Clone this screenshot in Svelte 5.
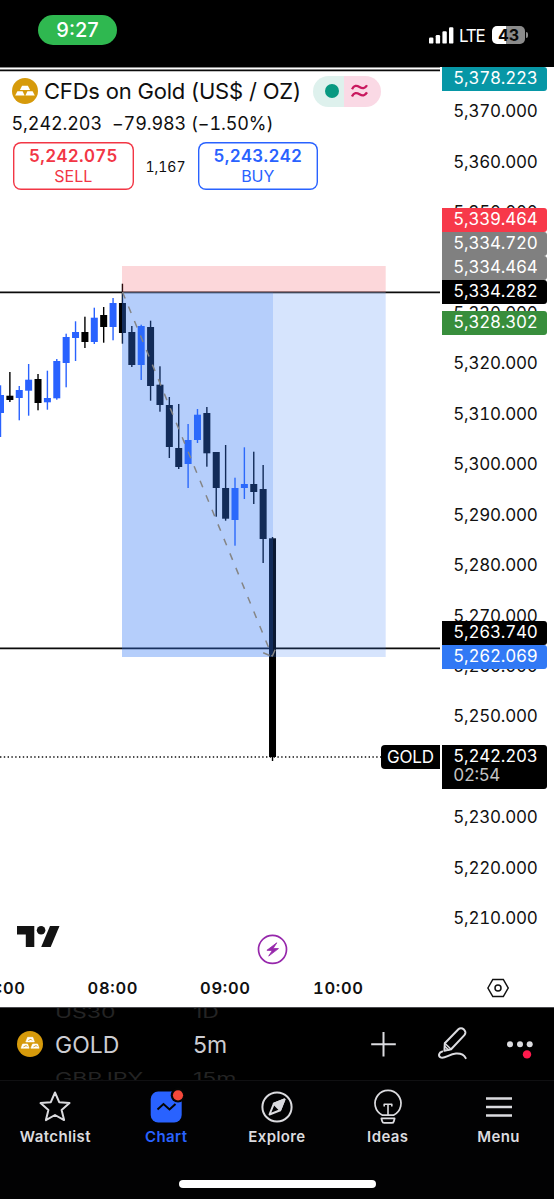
<script>
  const STEP = 9.38;
  const priceY = (p) => 112 + (5370 - p) * 5.044;
  const candleX = (i) => 0.5 + i * STEP;

  // [body top, body bottom, wick top, wick bottom, up?]
  const candles = [
    [395, 413, 385.3, 437, 1],
    [395.7, 400, 372, 402, 0],
    [390, 398, 386, 420.3, 1],
    [379.7, 390.7, 364, 415.7, 1],
    [379, 403, 374, 410.3, 0],
    [398, 402.3, 370.7, 409.7, 1],
    [361, 398.3, 359, 399.7, 1],
    [337, 363, 333.7, 387.3, 1],
    [332, 338, 321.3, 361, 1],
    [332, 342, 316.7, 348, 0],
    [317.7, 342, 307.7, 344, 1],
    [315, 327, 307, 342.7, 0],
    [303, 327, 298, 340.3, 1],
    [303, 333, 283.7, 343.7, 0],
    [332, 365, 326, 367, 0],
    [326, 365, 324.7, 380, 1],
    [327, 386, 320.7, 400.7, 0],
    [384.7, 405, 366.3, 411.7, 0],
    [405, 447, 397, 458, 0],
    [448, 467, 404, 469, 0],
    [440, 464, 424, 488, 1],
    [414.7, 440, 409, 443, 1],
    [413, 453.3, 407, 466.7, 0],
    [452, 488, 452, 516.7, 0],
    [488, 518.7, 445, 520.7, 0],
    [488, 520, 477.7, 545.7, 1],
    [484, 488, 447.3, 499, 1],
    [484, 492, 451.7, 504, 0],
    [489, 539, 465, 563, 0],
    [538.3, 757, 537, 761, 0],
  ];

  const ticks = [5370, 5360, 5350, 5330, 5320, 5310, 5300, 5290, 5280, 5270, 5260, 5250, 5230, 5220, 5210];

  const labels = [
    { text: '5,378.223', top: 67, h: 24, color: '#0797a6' },
    { text: '5,339.464', top: 208, h: 24, color: '#f7394a' },
    { text: '5,334.720', top: 232, h: 24, color: '#808080' },
    { text: '5,334.464', top: 256, h: 24, color: '#808080' },
    { text: '5,334.282', top: 280, h: 24, color: '#000' },
    { text: '5,328.302', top: 311, h: 24, color: '#388e3c' },
    { text: '5,263.740', top: 621, h: 24, color: '#000' },
    { text: '5,262.069', top: 645, h: 24, color: '#3179f5' },
    { text: '5,242.203', top: 745, h: 44, color: '#000', sub: '02:54' },
  ];

  const times = [
    { x: 0, text: '07:00' },
    { x: 112.5, text: '08:00' },
    { x: 225, text: '09:00' },
    { x: 338, text: '10:00' },
  ];

  const fmt = (n) => n.toLocaleString('en-US', { minimumFractionDigits: 3 });
</script>

{#snippet gold(detail)}
  <svg class="gold" viewBox="0 0 26 26" width="26" height="26">
    <circle cx="13" cy="13" r="13" fill="#d69a0b" />
    {#if detail}
      <g fill="#fff" stroke="#fff" stroke-width=".6" stroke-linejoin="round">
        <path d="M10.6 6.3h5.2l1.6 4.6H8.8z" />
        <path d="M5.6 13h5l1.5 4.2H4.1z" />
        <path d="M15.6 13h5l1.5 4.2h-8.2z" />
      </g>
      <path d="M11.2 9.5l2.8-1.3 1 1.3M6.5 15.8l2.8-1.3 1 1.3M16.5 15.8l2.8-1.3 1 1.3" fill="none" stroke="#d69a0b" stroke-width=".9" />
    {:else}
      <g fill="#fff">
        <path d="M10.1 7.7h5.8l2.2 4.4H7.9z" />
        <path d="M5.4 13.2h5.2l2 4.2H3.2z" />
        <path d="M15.4 13.2h5.2l2.2 4.2h-9.4z" />
      </g>
    {/if}
  </svg>
{/snippet}

<div class="screen">
  <header class="status">
    <span class="clock">9:27</span>
    <div class="signal">
      <svg width="25" height="17" viewBox="0 0 25 17" fill="#fff">
        <rect x="0" y="10.6" width="4.4" height="6" rx="1.2" />
        <rect x="6.7" y="8" width="4.4" height="8.6" rx="1.2" />
        <rect x="13.4" y="4.2" width="4.4" height="12.4" rx="1.2" />
        <rect x="20" y="0.2" width="4.4" height="16.4" rx="1.2" />
      </svg>
      <span class="lte">LTE</span>
      <span class="battery">43</span>
      <i class="nub"></i>
    </div>
  </header>

  <section class="chart">
    <svg class="plot" width="441" height="940" viewBox="0 67 441 940">
      <g stroke="#0b0b0b" stroke-width="1.7">
        <line x1="0" x2="440" y1="70.3" y2="70.3" />
        <line x1="0" x2="440" y1="292.3" y2="292.3" />
        <line x1="0" x2="440" y1="648.3" y2="648.3" />
      </g>
      <line x1="0" x2="440" y1="67.5" y2="67.5" stroke="#8a8a8a" />
      <line x1="0" x2="381" y1="757" y2="757" stroke="#111" stroke-width="1.3" stroke-dasharray="1.4 2.4" />

      {#each candles as [top, bottom, high, low, up], i}
        <g fill={up ? '#2962ff' : '#000'}>
          <rect x={candleX(i) - 0.7} y={high} width="1.4" height={low - high} />
          <rect x={candleX(i) - 3.5} y={top} width="7" height={bottom - top} />
        </g>
      {/each}

      <!-- short position: stop zone, target zone, filled part -->
      <rect x="122" y="266" width="263.7" height="26.3" fill="#f23645" fill-opacity=".2" />
      <rect x="122" y="292.3" width="263.7" height="364.7" fill="#3179f5" fill-opacity=".2" />
      <rect x="122" y="292.3" width="151" height="364.7" fill="#3179f5" fill-opacity=".2" />
      <line x1="122" x2="385.7" y1="292.6" y2="292.6" stroke="#787b86" stroke-opacity=".5" />
      <g fill="none" stroke="#858585" stroke-width="1.5">
        <line x1="122.5" y1="292" x2="272.3" y2="656.5" stroke-dasharray="7 8.7" />
        <path d="M263.2 652.8l9 3.7 3.7-8.6" stroke-dasharray="7 3" />
      </g>

      <path d="M385 745h55v24h-55a4 4 0 0 1-4-4v-16a4 4 0 0 1 4-4z" />
      <text class="tag" x="387" y="763" textLength="47">GOLD</text>

      <g fill="#131313">
        <path d="M17 926h17.3v21h-8.5v-12.5H17z" />
        <circle cx="41.1" cy="930.3" r="4.3" />
        <path d="M50 926h9.5l-8.8 21h-9.5z" />
      </g>

      <circle cx="272.5" cy="949.4" r="14" fill="#fff" stroke="#9627ab" stroke-width="1.7" />
      <path d="M276.8 942.8l-9.9 7.5 5.4.2-3.6 5.6 9.8-7.5-5.4-.2z" fill="#9627ab" stroke="#9627ab" stroke-width=".8" stroke-linejoin="round" />

      {#each times as t}
        <text class="time" x={t.x} y="994.3" textLength="50">{t.text}</text>
      {/each}
    </svg>

    <svg class="axis" width="113" height="940" viewBox="441 67 113 940">
      {#each ticks as p}
        <text x="453.3" y={priceY(p) + 5.2} textLength="84.5">{fmt(p)}</text>
      {/each}
      {#each labels as l}
        <path d="M442 {l.top}h102a3 3 0 0 1 3 3v{l.h - 6}a3 3 0 0 1 -3 3h-102z" fill={l.color} />
        <text class="light" x="453.3" y={l.top + 17} textLength="84.5">{l.text}</text>
        {#if l.sub}
          <text class="sub" x="453.3" y={l.top + 36.4} textLength="47">{l.sub}</text>
        {/if}
      {/each}
      <g fill="none" stroke="#111" stroke-width="1.5">
        <path d="M487.9 988l4.9-8.6h10.5l4.9 8.6-4.9 8.6h-10.5z" />
        <circle cx="498" cy="988" r="3" />
      </g>
    </svg>

    <div class="legend">
      <div class="title">
        {@render gold(false)}
        <span class="name">CFDs on Gold (US$ / OZ)</span>
        <div class="market">
          <span class="open"><i></i></span>
          <span class="approx">
            <svg width="17" height="14" viewBox="0 0 17 14" fill="none" stroke="#c9195f" stroke-width="2.3">
              <path d="M1 5.2C3 1.2 5.6 1.2 8.5 3S14 4.7 16 1.2" />
              <path d="M1 12.4c2-4 4.6-4 7.5-2.2S14 11.900 16 8.400" />
            </svg>
          </span>
        </div>
      </div>
      <div class="quote"><span class="last">5,242.203</span><span class="change">−79.983 (−1.50%)</span></div>
      <div class="trade">
        <div class="order sell"><b>5,242.075</b><span>SELL</span></div>
        <span class="spread">1,167</span>
        <div class="order buy"><b>5,243.242</b><span>BUY</span></div>
      </div>
    </div>
  </section>

  <section class="toolbar">
    {@render gold(true)}
    <div class="wheel symbol">
      <span class="prev">US30</span>
      <span class="current">GOLD</span>
      <span class="next">GBPJPY</span>
    </div>
    <div class="wheel interval">
      <span class="prev">1D</span>
      <span class="current">5m</span>
      <span class="next">15m</span>
    </div>
    <svg class="tools" width="190" height="40" viewBox="364 1024 190 40" fill="none" stroke="#dcdce0" stroke-width="2">
      <path d="M371.2 1044.2h24.6M383.5 1032v24.5" />
      <g stroke-linecap="round" stroke-linejoin="round">
        <path d="M444.8 1043.3l13.6-14a3.6 3.6 0 0 1 5.2 0l.8.8a3.6 3.6 0 0 1 0 5l-13.3 14.2-6.7 1.5z" />
        <path d="M444.8 1043.3l6.3 6M445 1046.5l3.8 3.6" stroke-width="1.5" />
        <path d="M442.3 1051.5c-3.600.8-4.300 4.300-1.700 5.800 3.600 2 8.400-3.200 15.400-3.700 4.700-.3 8.200 1.400 9.700 4.600" />
      </g>
      <g fill="#dcdce0" stroke="none">
        <circle cx="510" cy="1044.2" r="3" />
        <circle cx="520" cy="1044.2" r="3" />
        <circle cx="529.7" cy="1044.2" r="3" />
      </g>
      <circle cx="527" cy="1054.4" r="4.2" fill="#ff1a4d" stroke="none" />
    </svg>
  </section>

  <nav>
    <div class="item">
      <svg width="36" height="36" viewBox="0 0 36 36" fill="none" stroke="#dbdbdf" stroke-width="2" stroke-linejoin="round">
        <path d="M18 4.5l4.2 9.7 10.300.9-7.900 6.800 2.500 10.200L18 27l-9.100 5.100 2.500-10.200-7.900-6.800 10.300-.9z" />
      </svg>
      <span>Watchlist</span>
    </div>
    <div class="item active">
      <svg width="36" height="36" viewBox="0 0 36 36">
        <rect x="2.7" y="3.5" width="31" height="31" rx="7.5" fill="#2962ff" />
        <path d="M9.5 21.5l6-5.5 6 5.5 6-5.5" fill="none" stroke="#050505" stroke-width="2" />
        <circle cx="30" cy="7.3" r="7.3" fill="#050505" />
        <circle cx="30" cy="7.3" r="5.1" fill="#f5483b" />
      </svg>
      <span>Chart</span>
    </div>
    <div class="item">
      <svg width="36" height="36" viewBox="0 0 36 36" fill="none" stroke="#dbdbdf" stroke-width="2" stroke-linejoin="round">
        <circle cx="18" cy="19" r="14.6" />
        <path d="M25.5 11.5l-4.3 10.7-10.7 4.3 4.3-10.7z" />
        <path d="M25.5 11.5l-4.3 10.7-6.4-6.4z" fill="#dbdbdf" />
      </svg>
      <span>Explore</span>
    </div>
    <div class="item">
      <svg width="36" height="36" viewBox="0 0 36 36" fill="none" stroke="#dbdbdf" stroke-width="1.8" stroke-linejoin="round">
        <path d="M12.5 27.2a13 13 0 1 1 11 0z" />
        <path d="M11.4 30.4h13.2l-.8 3a2 2 0 0 1-2 1.5h-7.600a2 2 0 0 1-2-1.500z" />
        <path d="M14.2 18.5v-2.200h7.600v2.200M18 16.500v10.500" stroke-width="1.6" />
      </svg>
      <span>Ideas</span>
    </div>
    <div class="item">
      <svg width="36" height="36" viewBox="0 0 36 36" stroke="#dbdbdf" stroke-width="2.6">
        <path d="M5 10.5h26M5 19h26M5 27.5h26" />
      </svg>
      <span>Menu</span>
    </div>
  </nav>
  <div class="home"></div>
</div>

<style>
  :global(body) {
    background: #000;
  }
  .screen {
    width: 554px;
    height: 1199px;
    overflow: hidden;
    display: flex;
    flex-direction: column;
    background: #020203;
    font-family: Inter, "Liberation Sans", sans-serif;
    color: #0f0f0f;
  }
  svg {
    display: block;
    flex: none;
  }

  /* status bar */
  .status {
    height: 67px;
    flex: none;
    box-sizing: border-box;
    padding: 15px 26px 0 38px;
    display: flex;
    justify-content: space-between;
    background: #000;
    color: #fff;
  }
  .clock {
    width: 79px;
    height: 30px;
    border-radius: 15px;
    background: #2fb850;
    font-size: 20px;
    font-weight: 500;
    line-height: 31px;
    text-align: center;
  }
  .signal {
    display: flex;
    align-items: center;
    height: 40px;
  }
  .lte {
    width: 27px;
    margin: 1px 6px 0 5px;
    font-size: 17px;
    letter-spacing: -1.2px;
    white-space: nowrap;
  }
  .battery {
    width: 33px;
    height: 18px;
    border-radius: 5px;
    background: linear-gradient(90deg, #fff 43%, #8b8b8b 43%);
    color: #080808;
    font-size: 16px;
    font-weight: 700;
    line-height: 18px;
    text-align: center;
  }
  .nub {
    width: 2px;
    height: 6px;
    margin-left: 1px;
    border-radius: 0 2px 2px 0;
    background: #8b8b8b;
  }

  /* chart */
  .chart {
    position: relative;
    display: flex;
    height: 940px;
    flex: none;
    background: #fff;
  }
  text {
    font-size: 17px;
    font-variant-numeric: tabular-nums;
    fill: #111;
  }
  .tag,
  .light {
    fill: #fff;
  }
  .sub {
    fill: #c4c4c4;
  }
  .time {
    font-size: 16.5px;
    font-weight: 600;
    text-anchor: middle;
  }
  .legend {
    position: absolute;
    left: 12px;
    top: 8px;
  }
  .title {
    display: flex;
    align-items: center;
    height: 32px;
  }
  .name {
    width: 269px;
    margin-left: 6px;
    font-size: 22px;
    letter-spacing: -0.2px;
    white-space: nowrap;
  }
  .market {
    display: flex;
    width: 68px;
    height: 31px;
    border-radius: 16px;
    overflow: hidden;
  }
  .market span {
    flex: 1;
    display: flex;
    align-items: center;
  }
  .open {
    background: #def1ed;
  }
  .open i {
    width: 14px;
    height: 14px;
    margin-left: 11.5px;
    border-radius: 50%;
    background: #089981;
  }
  .approx {
    padding-left: 7px;
    background: #fad9e5;
  }
  .quote {
    display: flex;
    gap: 10px;
    height: 22px;
    margin: 6px 0 0 -0.5px;
    font-size: 18px;
    letter-spacing: -0.1px;
    line-height: 22px;
    font-variant-numeric: tabular-nums;
    white-space: nowrap;
  }
  .trade {
    display: flex;
    align-items: center;
    margin: 7px 0 0 1px;
    font-size: 16px;
    font-variant-numeric: tabular-nums;
  }
  .order {
    box-sizing: border-box;
    width: 120.5px;
    height: 48px;
    box-shadow: inset 0 0 0 1.4px currentColor;
    border-radius: 8px;
    display: flex;
    flex-direction: column;
    align-items: center;
    padding-top: 4px;
    line-height: 20px;
  }
  .order b {
    font-size: 17px;
    font-weight: 600;
    letter-spacing: 0.3px;
    margin-right: -0.3px;
  }
  .sell {
    color: #f23645;
  }
  .buy {
    color: #2962ff;
  }
  .spread {
    width: 64px;
    text-align: center;
    font-size: 14px;
  }

  /* symbol / interval wheels and chart tools */
  .toolbar {
    display: flex;
    align-items: center;
    height: 74px;
    flex: none;
    box-sizing: border-box;
    padding-left: 17px;
    border-top: 1px solid #4a4a4e;
    border-bottom: 1px solid #101012;
    background: #000;
    overflow: hidden;
  }
  .wheel {
    display: flex;
    flex-direction: column;
    justify-content: center;
    height: 100px;
    padding-top: 2px;
    font-size: 23px;
    line-height: 33px;
    color: #cdcdd2;
    white-space: nowrap;
  }
  .symbol {
    width: 138px;
    margin-left: 12px;
  }
  .interval {
    width: 171px;
  }
  .prev,
  .next {
    color: #242424;
    transform: scaleY(0.72);
    transform-origin: left center;
  }

  nav {
    display: flex;
    height: 99px;
    flex: none;
  }
  .item {
    flex: 1;
    display: flex;
    flex-direction: column;
    align-items: center;
    padding-top: 7px;
    font-size: 15px;
    font-weight: 600;
    letter-spacing: 0.4px;
    line-height: 20px;
    color: #dbdbdf;
  }
  .item span {
    margin-top: 3px;
  }
  .active {
    color: #2962ff;
  }
  .home {
    width: 197px;
    height: 8px;
    margin: 0 auto;
    border-radius: 4px;
    background: #fff;
  }
</style>
